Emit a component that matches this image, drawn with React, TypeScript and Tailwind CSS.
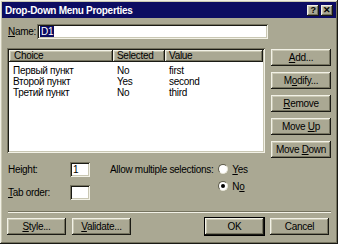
import React from 'react';

const raised =
  'shadow-[inset_-1px_-1px_#1a1a14,inset_1px_1px_#f2f1e6,inset_-2px_-2px_#75735f,inset_2px_2px_#c9c7b3]';
const sunken =
  'shadow-[inset_1px_1px_#75735f,inset_-1px_-1px_#f2f1e6,inset_2px_2px_#1a1a14,inset_-2px_-2px_#c9c7b3]';

function Btn({ children, w = 'w-[60px]', def = false }: { children: React.ReactNode; w?: string; def?: boolean }) {
  return (
    <div
      className={`${w} h-[17px] flex items-center justify-center bg-[#aaa893] text-black ${
        def ? 'outline outline-1 outline-black ' : ''
      }${raised}`}
    >
      <span>{children}</span>
    </div>
  );
}

const rows = [
  ['Первый пункт', 'No', 'first'],
  ['Второй пункт', 'Yes', 'second'],
  ['Третий пункт', 'No', 'third'],
];

function Radio({ on }: { on?: boolean }) {
  return (
    <div className="w-[10px] h-[10px] rounded-full bg-white border border-t-[#5c5a4a] border-l-[#5c5a4a] border-b-[#e8e6d8] border-r-[#e8e6d8] flex items-center justify-center">
      {on && <div className="w-[4px] h-[4px] rounded-full bg-black" />}
    </div>
  );
}

export default function App() {
  return (
    <div
      className="w-[338px] h-[244px] bg-[#aaa893] text-black overflow-hidden text-[10px] tracking-[-0.3px]"
      style={{ fontFamily: '"Liberation Sans", Arial, sans-serif' }}
    >
      <div className={`w-full h-full p-[2px] ${raised}`}>
        {/* title bar */}
        <div className="h-[16px] bg-[#0c0c62] flex items-center justify-between pl-[3px] pr-[3px]">
          <span className="text-white font-bold text-[10px] tracking-[-0.3px]">Drop-Down Menu Properties</span>
          <div className="flex gap-[2px]">
            <div className={`w-[12px] h-[11px] bg-[#aaa893] flex items-center justify-center text-[9px] font-bold leading-none ${raised}`}>?</div>
            <div className={`w-[12px] h-[11px] bg-[#aaa893] flex items-center justify-center text-[9px] font-bold leading-none ${raised}`}>✕</div>
          </div>
        </div>

        <div className="px-[5px]">
          {/* name row */}
          <div className="flex items-center mt-[6px] h-[15px]">
            <span className="w-[29px] ml-[1px]"><u>N</u>ame:</span>
            <div className={`w-[231px] h-[15px] bg-white flex items-center pl-[3px] ${sunken}`}>
              <span className="bg-[#0c0c62] text-white px-[1px] leading-[11px]">D1</span>
            </div>
          </div>

          {/* list + buttons */}
          <div className="flex mt-[9px]">
            <div className={`w-[258px] h-[105px] bg-white p-[2px] ${sunken}`}>
              <div className="flex h-[12px] leading-none">
                <div className={`w-[104px] bg-[#aaa893] flex items-center pl-[5px] ${raised}`}>Choice</div>
                <div className={`w-[52px] bg-[#aaa893] flex items-center pl-[4px] ${raised}`}>Selected</div>
                <div className={`flex-1 bg-[#aaa893] flex items-center pl-[4px] ${raised}`}>Value</div>
              </div>
              <div className="mt-[3px]">
                {rows.map((r) => (
                  <div key={r[0]} className="flex h-[11px] items-center leading-none">
                    <span className="w-[104px] pl-[4px]">{r[0]}</span>
                    <span className="w-[52px] pl-[4px]">{r[1]}</span>
                    <span className="pl-[4px]">{r[2]}</span>
                  </div>
                ))}
              </div>
            </div>
            <div className="ml-[6px] flex flex-col gap-[6px] mt-[1px]">
              <Btn><u>A</u>dd...</Btn>
              <Btn>M<u>o</u>dify...</Btn>
              <Btn><u>R</u>emove</Btn>
              <Btn>Move <u>U</u>p</Btn>
              <Btn>Move <u>D</u>own</Btn>
            </div>
          </div>

          {/* options */}
          <div className="flex mt-[4px]">
            <div className="flex flex-col gap-[8px]">
              <div className="flex items-center h-[15px]">
                <span className="w-[62px] ml-[1px]">Height:</span>
                <div className={`w-[20px] h-[15px] bg-white pl-[3px] flex items-center ${sunken}`}>1</div>
              </div>
              <div className="flex items-center h-[15px]">
                <span className="w-[62px] ml-[1px]"><u>T</u>ab order:</span>
                <div className={`w-[20px] h-[15px] bg-white ${sunken}`} />
              </div>
            </div>
            <div className="ml-[20px] h-[15px] flex items-center">Allow multiple selections:</div>
            <div className="ml-[5px] flex flex-col gap-[7px] pt-[2px]">
              <div className="flex items-center h-[10px] gap-[4px]">
                <Radio />
                <span><u>Y</u>es</span>
              </div>
              <div className="flex items-center h-[10px] gap-[4px]">
                <Radio on />
                <span>N<u>o</u></span>
              </div>
            </div>
          </div>

          {/* separator */}
          <div className="mt-[11px] ml-[1px] w-[323px] h-[2px] border-t border-t-[#75735f] border-b border-b-[#f2f1e6]" />

          {/* bottom buttons */}
          <div className="flex mt-[5px]">
            <Btn w="w-[59px]"><u>S</u>tyle...</Btn>
            <div className="ml-[6px]">
              <Btn w="w-[59px]"><u>V</u>alidate...</Btn>
            </div>
            <div className="ml-auto flex gap-[6px] mr-[2px]">
              <Btn w="w-[59px]" def>OK</Btn>
              <Btn w="w-[59px]">Cancel</Btn>
            </div>
          </div>
        </div>
      </div>
    </div>
  );
}
